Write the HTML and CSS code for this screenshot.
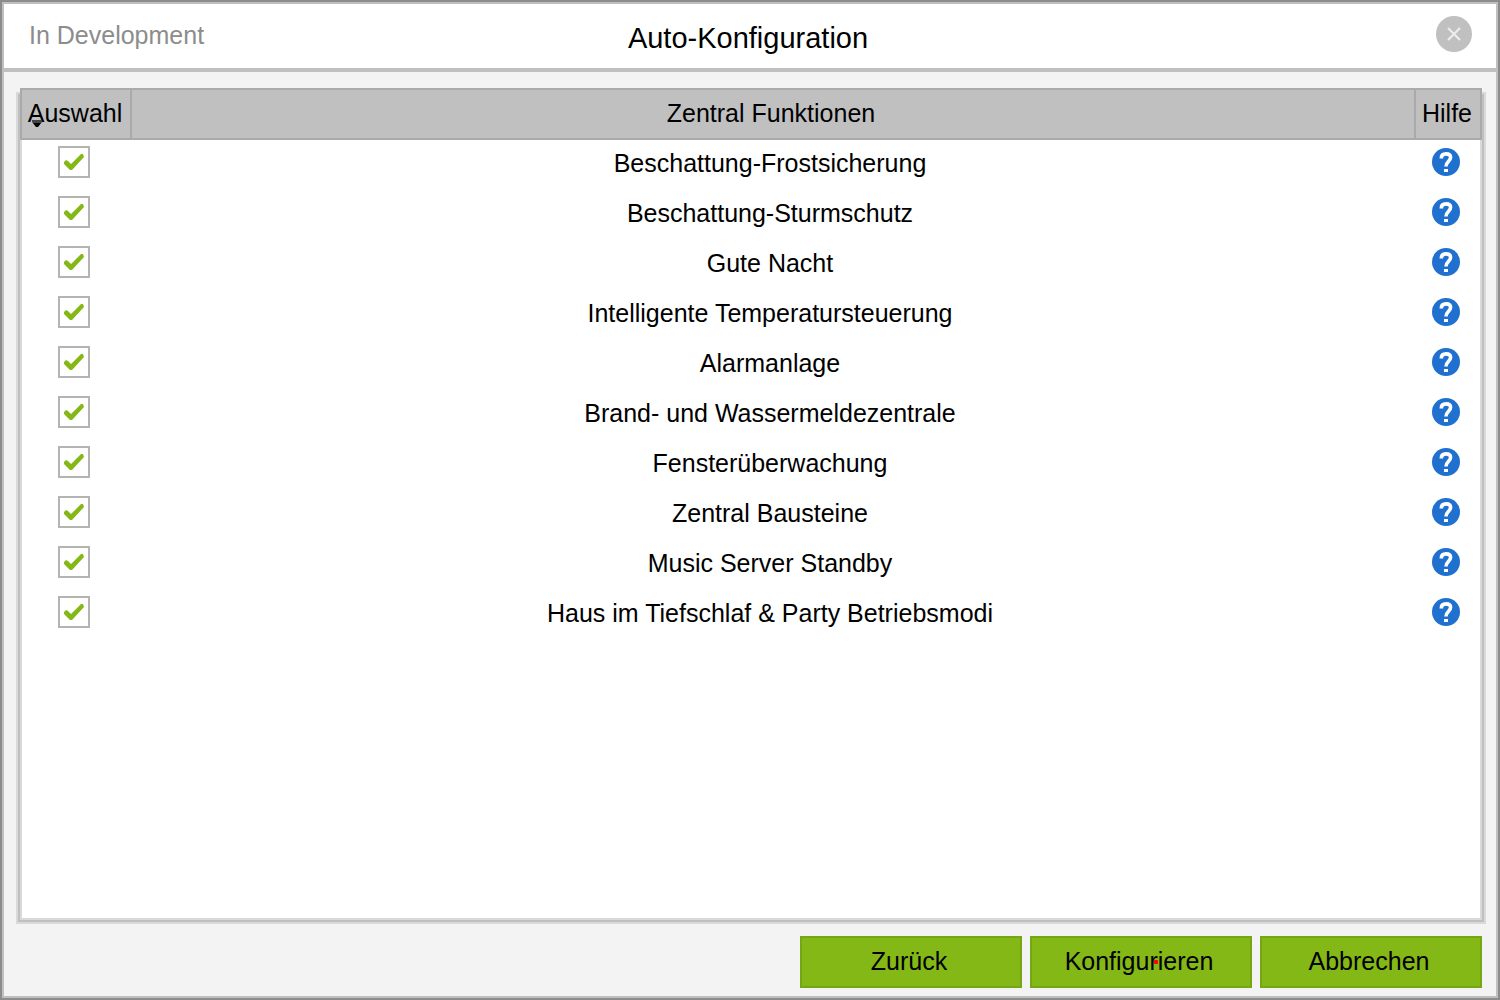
FILE: index.html
```html
<!DOCTYPE html>
<html lang="de">
<head>
<meta charset="utf-8">
<meta name="viewport" content="width=device-width, initial-scale=1">
<title>Auto-Konfiguration</title>
<link rel="stylesheet" href="styles.css">
</head>
<body>
<svg class="sprite" aria-hidden="true">
  <symbol id="help" viewBox="0 0 28 28">
    <circle cx="14" cy="14" r="14" fill="#2070d0"/>
    <path d="M9.3 10.4C9.3 7.2 11 5.9 14 5.9s4.6 1.3 4.6 3.7c0 3.6-4.6 4-4.6 9" fill="none" stroke="#fff" stroke-width="3.6"/>
    <rect x="12" y="21" width="4" height="3" fill="#fff"/>
  </symbol>
</svg>
<main class="dialog">
  <header class="titlebar">
    <span class="status">In Development</span>
    <h1 class="title">Auto-Konfiguration</h1>
    <button class="close" type="button" aria-label="Schließen">
      <svg class="close-icon" viewBox="0 0 36 36"><circle cx="18" cy="18" r="18" fill="#c0c0c0"/><path d="M12 12L24 24M24 12L12 24" stroke="#ececec" stroke-width="2.2"/></svg>
    </button>
  </header>
  <div class="content">
    <section class="panel">
      <table class="functions">
        <thead>
          <tr><th class="col-select" scope="col">Auswahl<span class="sort"></span></th><th scope="col">Zentral Funktionen</th><th class="col-help" scope="col">Hilfe</th></tr>
        </thead>
        <tbody>
          <tr><td><input class="check" type="checkbox" id="f1" checked></td><td class="name"><label for="f1">Beschattung-Frostsicherung</label></td><td><button class="help" type="button" aria-label="Hilfe"><svg class="help-icon"><use href="#help"/></svg></button></td></tr>
          <tr><td><input class="check" type="checkbox" id="f2" checked></td><td class="name"><label for="f2">Beschattung-Sturmschutz</label></td><td><button class="help" type="button" aria-label="Hilfe"><svg class="help-icon"><use href="#help"/></svg></button></td></tr>
          <tr><td><input class="check" type="checkbox" id="f3" checked></td><td class="name"><label for="f3">Gute Nacht</label></td><td><button class="help" type="button" aria-label="Hilfe"><svg class="help-icon"><use href="#help"/></svg></button></td></tr>
          <tr><td><input class="check" type="checkbox" id="f4" checked></td><td class="name"><label for="f4">Intelligente Temperatursteuerung</label></td><td><button class="help" type="button" aria-label="Hilfe"><svg class="help-icon"><use href="#help"/></svg></button></td></tr>
          <tr><td><input class="check" type="checkbox" id="f5" checked></td><td class="name"><label for="f5">Alarmanlage</label></td><td><button class="help" type="button" aria-label="Hilfe"><svg class="help-icon"><use href="#help"/></svg></button></td></tr>
          <tr><td><input class="check" type="checkbox" id="f6" checked></td><td class="name"><label for="f6">Brand- und Wassermeldezentrale</label></td><td><button class="help" type="button" aria-label="Hilfe"><svg class="help-icon"><use href="#help"/></svg></button></td></tr>
          <tr><td><input class="check" type="checkbox" id="f7" checked></td><td class="name"><label for="f7">Fensterüberwachung</label></td><td><button class="help" type="button" aria-label="Hilfe"><svg class="help-icon"><use href="#help"/></svg></button></td></tr>
          <tr><td><input class="check" type="checkbox" id="f8" checked></td><td class="name"><label for="f8">Zentral Bausteine</label></td><td><button class="help" type="button" aria-label="Hilfe"><svg class="help-icon"><use href="#help"/></svg></button></td></tr>
          <tr><td><input class="check" type="checkbox" id="f9" checked></td><td class="name"><label for="f9">Music Server Standby</label></td><td><button class="help" type="button" aria-label="Hilfe"><svg class="help-icon"><use href="#help"/></svg></button></td></tr>
          <tr><td><input class="check" type="checkbox" id="f10" checked></td><td class="name"><label for="f10">Haus im Tiefschlaf &amp; Party Betriebsmodi</label></td><td><button class="help" type="button" aria-label="Hilfe"><svg class="help-icon"><use href="#help"/></svg></button></td></tr>
        </tbody>
      </table>
    </section>
    <footer class="actions">
      <button class="action" type="button">Zurück</button>
      <button class="action" type="button">Konfigurieren<span class="marker"></span></button>
      <button class="action" type="button">Abbrechen</button>
    </footer>
  </div>
</main>
</body>
</html>
```
FILE: styles.css
```css
* {
  box-sizing: border-box;
}

body {
  margin: 0;
  color: #000;
  font: 25px/28px "Liberation Sans", Arial, sans-serif;
}

button {
  padding: 0;
  color: inherit;
  font: inherit;
}

.sprite {
  position: absolute;
  width: 0;
  height: 0;
}

.dialog {
  display: flex;
  flex-direction: column;
  min-height: 100vh;
  border: 2px solid #8c8c8c;
  background: #f3f3f3;
  box-shadow: inset 0 0 0 2px #bfbfbf;
  padding: 2px;
}

.titlebar {
  display: grid;
  grid-template-columns: 1fr auto 1fr;
  align-items: center;
  height: 68px;
  padding: 0 24px 4px 24px;
  border-bottom: 4px solid #bfbfbf;
  background: #fff;
}

.status {
  padding: 2px 0 0 1px;
  color: #8c8c8c;
}

.title {
  margin: 0;
  padding: 8px 4px 0 0;
  font-size: 29px;
  font-weight: normal;
  line-height: 32px;
}

.close {
  justify-self: end;
  width: 36px;
  height: 36px;
  border: 0;
  background: none;
}

.close-icon {
  display: block;
  width: 36px;
  height: 36px;
}

.content {
  display: flex;
  flex: 1;
  flex-direction: column;
  gap: 16px;
  padding: 16px 14px 8px 16px;
}

.panel {
  position: relative;
  z-index: 0;
  flex: 1;
  background: #fff;
  border: 2px solid #d9d9d9;
  border-top: 0;
}

/* soft double frame that starts a little below the header's top edge */
.panel::before {
  content: "";
  position: absolute;
  z-index: -1;
  inset: 8px -2px -2px;
  box-shadow: 0 0 0 2px #bfbfbf, 0 0 0 4px #d9d9d9;
}

.functions {
  width: 100%;
  table-layout: fixed;
  border-spacing: 0;
  text-align: center;
}

.functions th {
  position: relative;
  height: 52px;
  padding: 0 4px 2px 0;
  border: solid #aaa;
  border-width: 2px 2px 2px 0;
  background: #c0c0c0;
  font-weight: normal;
}

.functions thead {
  box-shadow: -2px 0 #aaa, 2px 0 #aaa;
}

.functions .col-select {
  width: 110px;
  padding-right: 2px;
}

.functions .col-help {
  width: 64px;
  padding-right: 2px;
  border-right: 0;
}

.functions td {
  height: 50px;
  padding: 0 4px 6px 0;
  vertical-align: middle;
}

.functions td:first-child {
  padding-right: 6px;
}

.functions .name {
  padding: 0 8px 4px 0;
}

.sort {
  position: absolute;
  top: 30px;
  left: 10px;
  width: 10px;
  height: 7px;
  background: linear-gradient(#444 3px, #000 3px);
  clip-path: polygon(0 0, 100% 0, 100% 2px, 6px 100%, 4px 100%, 0 2px);
}

.check {
  display: block;
  width: 32px;
  height: 32px;
  margin: 0 auto;
  border: 2px solid #b4b4b4;
  background: #fff;
  appearance: none;
}

.check:checked::before {
  content: "";
  display: block;
  width: 28px;
  height: 28px;
  background: #84b817;
  clip-path: polygon(4px 14px, 6px 12px, 8px 13px, 11px 16px, 21px 6px, 23px 6px, 24px 9px, 12px 22px, 10px 22px, 4px 16px);
}

.help {
  display: block;
  width: 28px;
  height: 28px;
  margin: 0 auto;
  border: 0;
  background: none;
}

.help-icon {
  display: block;
  width: 28px;
  height: 28px;
}

.actions {
  display: flex;
  justify-content: flex-end;
  gap: 8px;
}

.action {
  position: relative;
  width: 222px;
  height: 52px;
  border: 2px solid #76a515;
  background: #84b817;
  padding: 0 4px 2px 0;
}

.marker {
  position: absolute;
  top: 22px;
  left: 122px;
  width: 4px;
  height: 4px;
  border-radius: 1px;
  background: #f00;
}
```
